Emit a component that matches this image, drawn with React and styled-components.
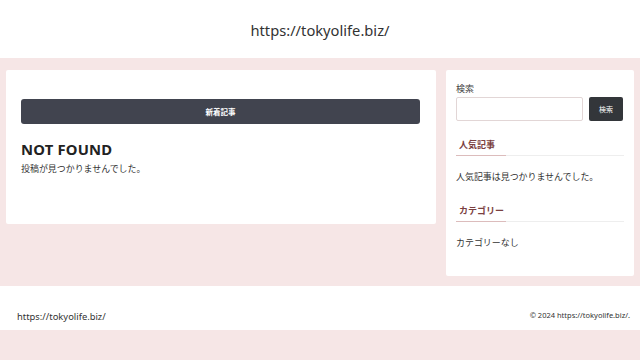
import React from "react";
import styled, { createGlobalStyle } from "styled-components";

const Global = createGlobalStyle`
  html, body { margin: 0; padding: 0; background: #f6e6e6; }
  body { font-family: "Noto Sans", "Noto Sans CJK JP", sans-serif; color: #333; }
  * { box-sizing: border-box; }
`;

const Header = styled.header`
  height: 58px;
  background: #fff;
  display: flex;
  align-items: center;
  justify-content: center;
  padding-top: 2px;
`;

const SiteTitle = styled.div`
  font-size: 14.7px;
  color: #333;
`;

const Content = styled.div`
  display: flex;
  align-items: flex-start;
  gap: 10px;
  padding: 12px 6px 10px;
`;

const Card = styled.div`
  background: #fff;
  border-radius: 2px;
  width: ${(p) => p.$w}px;
  height: ${(p) => p.$h}px;
`;

const Main = styled(Card)`
  padding: 29px 16px 0 15px;
`;

const NewBar = styled.div`
  height: 25px;
  background: #41444f;
  border-radius: 3px;
  color: #fff;
  font-size: 7.5px;
  font-weight: 700;
  display: flex;
  align-items: center;
  justify-content: center;
`;

const NotFound = styled.h1`
  margin: 16px 0 0;
  font-size: 14.8px;
  font-weight: 700;
  color: #222;
  line-height: 18px;
  letter-spacing: 0.2px;
`;

const Text = styled.p`
  margin: ${(p) => p.$m || "0"};
  font-size: 8.95px;
  line-height: 14px;
  color: #333;
`;

const Side = styled(Card)`
  padding: 13px 10px 0;
`;

const Label = styled.div`
  font-size: 9px;
  line-height: 12px;
  color: #444;
`;

const SearchRow = styled.div`
  display: flex;
  gap: 6px;
  margin-top: 2px;
`;

const Input = styled.div`
  width: 127px;
  height: 24px;
  border: 1px solid #e2d6d6;
  border-radius: 2px;
  background: #fff;
`;

const SearchBtn = styled.div`
  width: 34px;
  height: 24px;
  background: #33363a;
  border-radius: 2px;
  color: #fff;
  font-size: 7px;
  display: flex;
  align-items: center;
  justify-content: center;
`;

const WidgetTitle = styled.h2`
  margin: ${(p) => p.$m};
  padding: 0 0 4px 3px;
  font-size: 9px;
  line-height: 12px;
  font-weight: 700;
  color: #7a4040;
  position: relative;
  border-bottom: 1px solid #eee;
  &::after {
    content: "";
    position: absolute;
    left: 0;
    bottom: -1px;
    width: 50px;
    height: 1px;
    background: #dcbcbc;
  }
`;

const Footer = styled.footer`
  height: 44px;
  background: #fff;
  display: flex;
  justify-content: space-between;
  align-items: flex-end;
  padding: 0 10px 6px 17px;
`;

const FootLeft = styled.div`
  font-size: 9.4px;
  color: #333;
  line-height: 14px;
`;

const FootRight = styled.div`
  font-size: 7.5px;
  color: #333;
  line-height: 14px;
  margin-bottom: 2px;
`;

export default function App() {
  return (
    <>
      <Global />
      <Header>
        <SiteTitle>https://tokyolife.biz/</SiteTitle>
      </Header>
      <Content>
        <Main $w={430} $h={154}>
          <NewBar>新着記事</NewBar>
          <NotFound>NOT FOUND</NotFound>
          <Text $m="4px 0 0">投稿が見つかりませんでした。</Text>
        </Main>
        <Side $w={188} $h={206}>
          <Label>検索</Label>
          <SearchRow>
            <Input />
            <SearchBtn>検索</SearchBtn>
          </SearchRow>
          <WidgetTitle $m="18px 0 0">人気記事</WidgetTitle>
          <Text $m="14px 0 0">人気記事は見つかりませんでした。</Text>
          <WidgetTitle $m="21px 0 0">カテゴリー</WidgetTitle>
          <Text $m="14px 0 0">カテゴリーなし</Text>
        </Side>
      </Content>
      <Footer>
        <FootLeft>https://tokyolife.biz/</FootLeft>
        <FootRight>© 2024 https://tokyolife.biz/.</FootRight>
      </Footer>
    </>
  );
}
